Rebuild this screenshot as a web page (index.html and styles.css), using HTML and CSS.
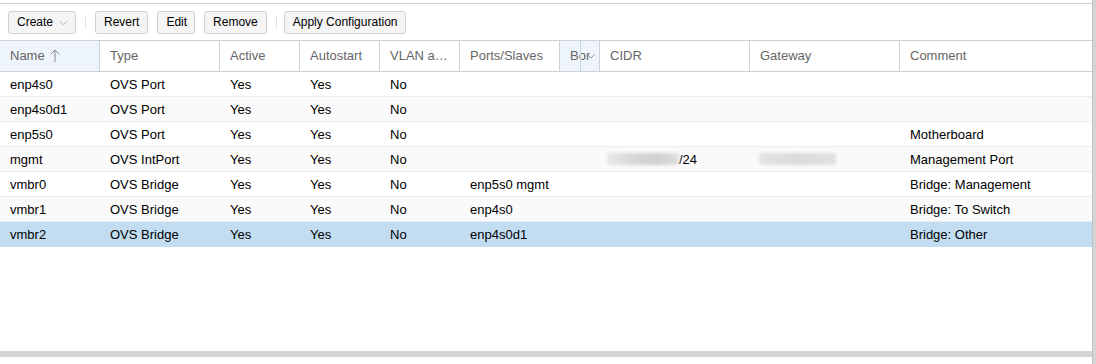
FILE: index.html
```html
<!DOCTYPE html>
<html>
<head>
<meta charset="utf-8">
<link rel="stylesheet" href="styles.css">
</head>
<body>
<div class="frame">
  <div class="panel">
    <div class="toolbar">
      <button class="btn btn-menu">Create <svg class="chev" width="9" height="6" viewBox="0 0 9 6"><path d="M0.5 0.8 L4.5 4.8 L8.5 0.8" fill="none" stroke="#b5b5b5" stroke-width="1"/></svg></button>
      <span class="sep"></span>
      <button class="btn">Revert</button>
      <button class="btn btn-edit">Edit</button>
      <button class="btn">Remove</button>
      <span class="sep sep-tight"></span>
      <button class="btn">Apply Configuration</button>
    </div>
    <div class="grid">
      <div class="row head">
        <div class="hc sorted">Name <svg class="arrow" width="10" height="13" viewBox="0 0 10 13"><path d="M5 1 V13 M0.8 5.2 L5 1 L9.2 5.2" fill="none" stroke="#888" stroke-width="1"/></svg></div>
        <div class="hc">Type</div>
        <div class="hc">Active</div>
        <div class="hc">Autostart</div>
        <div class="hc">VLAN a…</div>
        <div class="hc">Ports/Slaves</div>
        <div class="hc hover"><span class="clip">Bond</span><span class="trig"><svg width="8" height="5" viewBox="0 0 8 5"><path d="M0.5 0.5 L4 4 L7.5 0.5" fill="none" stroke="#999" stroke-width="1"/></svg></span></div>
        <div class="hc">CIDR</div>
        <div class="hc">Gateway</div>
        <div class="hc last">Comment</div>
      </div>
      <div class="row">
        <div class="c">enp4s0</div><div class="c">OVS Port</div><div class="c">Yes</div><div class="c">Yes</div><div class="c">No</div><div class="c"></div><div class="c"></div><div class="c"></div><div class="c"></div><div class="c"></div>
      </div>
      <div class="row alt">
        <div class="c">enp4s0d1</div><div class="c">OVS Port</div><div class="c">Yes</div><div class="c">Yes</div><div class="c">No</div><div class="c"></div><div class="c"></div><div class="c"></div><div class="c"></div><div class="c"></div>
      </div>
      <div class="row">
        <div class="c">enp5s0</div><div class="c">OVS Port</div><div class="c">Yes</div><div class="c">Yes</div><div class="c">No</div><div class="c"></div><div class="c"></div><div class="c"></div><div class="c"></div><div class="c">Motherboard</div>
      </div>
      <div class="row alt">
        <div class="c">mgmt</div><div class="c">OVS IntPort</div><div class="c">Yes</div><div class="c">Yes</div><div class="c">No</div><div class="c"></div><div class="c"></div><div class="c cidr"><span class="blur b1"></span>/24</div><div class="c gw"><span class="blur b2"></span></div><div class="c">Management Port</div>
      </div>
      <div class="row">
        <div class="c">vmbr0</div><div class="c">OVS Bridge</div><div class="c">Yes</div><div class="c">Yes</div><div class="c">No</div><div class="c">enp5s0 mgmt</div><div class="c"></div><div class="c"></div><div class="c"></div><div class="c">Bridge: Management</div>
      </div>
      <div class="row alt">
        <div class="c">vmbr1</div><div class="c">OVS Bridge</div><div class="c">Yes</div><div class="c">Yes</div><div class="c">No</div><div class="c">enp4s0</div><div class="c"></div><div class="c"></div><div class="c"></div><div class="c">Bridge: To Switch</div>
      </div>
      <div class="row sel">
        <div class="c">vmbr2</div><div class="c">OVS Bridge</div><div class="c">Yes</div><div class="c">Yes</div><div class="c">No</div><div class="c">enp4s0d1</div><div class="c"></div><div class="c"></div><div class="c"></div><div class="c">Bridge: Other</div>
      </div>
      <div class="empty"></div>
    </div>
    <div class="hscroll"></div>
  </div>
  <div class="vscroll"></div>
</div>
</body>
</html>
```

FILE: styles.css
```css
* { box-sizing: border-box; }
html, body { margin: 0; padding: 0; background: #fff; }
body {
  font-family: "Liberation Sans", Arial, Helvetica, sans-serif;
  font-size: 13px;
  color: #000;
  width: 1096px;
  height: 364px;
  overflow: hidden;
}
.frame {
  display: flex;
  height: 364px;
}
.panel {
  width: 1092px;
  display: flex;
  flex-direction: column;
  padding-top: 3px;
}
.vscroll {
  width: 4px;
  background: #d4d4d4;
  border-left: 1px solid #c4c4c4;
}
.toolbar {
  height: 38px;
  border-top: 1px solid #d0d0d0;
  border-bottom: 1px solid #d0d0d0;
  display: flex;
  align-items: center;
  padding: 0 0 0 8px;
  gap: 9px;
}
.btn {
  height: 23px;
  font-family: "Liberation Sans", Arial, Helvetica, sans-serif;
  font-size: 12px;
  color: #000;
  background: #f5f5f5;
  border: 1px solid #cfcfcf;
  border-radius: 3px;
  padding: 0 8px;
  display: flex;
  align-items: center;
  gap: 6px;
  margin: 0;
}
.btn-menu { padding-right: 7px; }
.btn-edit { padding: 0 7px 0 8px; }
.chev { margin-top: 1px; }
.sep {
  width: 1px;
  height: 13px;
  background: #e0e0e0;
}
.sep-tight { margin-right: -2px; }
.grid {
  display: flex;
  flex-direction: column;
  flex: 1;
}
.row {
  display: grid;
  grid-template-columns: 100px 120px 80px 80px 80px 100px 40px 150px 150px 192px;
  height: 25px;
  border-bottom: 1px solid #ededed;
  align-items: stretch;
}
.row.alt { background: #fafafa; }
.row.sel { background: #c2ddf2; border-bottom-color: #c2ddf2; }
.row.head {
  height: 31px;
  border-bottom: 1px solid #d0d0d0;
  color: #666;
}
.hc {
  border-right: 1px solid #d0d0d0;
  padding: 0 0 1px 10px;
  display: flex;
  align-items: center;
  white-space: nowrap;
  overflow: hidden;
  position: relative;
}
.hc.last { border-right: none; }
.hc.sorted { background: #eef4fb; }
.hc.hover { background: #eef4fb; padding-left: 10px; }
.arrow { margin-left: 5px; margin-top: -1px; }
.clip { display: block; overflow: hidden; width: 20px; flex: none; }
.trig {
  position: absolute;
  right: 0;
  top: 0;
  bottom: 0;
  width: 19px;
  border-left: 1px solid #c8d6e6;
  display: flex;
  align-items: center;
  justify-content: flex-start;
  padding-left: 6px;
}
.c {
  padding: 0 0 0 10px;
  display: flex;
  align-items: center;
  white-space: nowrap;
  overflow: hidden;
}
.cidr { padding-left: 7px; }
.gw { padding-left: 9px; }
.blur {
  display: inline-block;
  height: 12px;
  background: linear-gradient(90deg, #e8e8e8, #d6d6d6 40%, #cfcfcf 70%, #e0e0e0);
  filter: blur(1.5px);
  border-radius: 2px;
}
.b1 { width: 72px; }
.b2 { width: 77px; background: linear-gradient(90deg, #e4e4e4, #dadada 50%, #e2e2e2); }
.empty { flex: 1; }
.hscroll {
  height: 6px;
  background: #d4d4d4;
  margin-bottom: 7px;
}
```
